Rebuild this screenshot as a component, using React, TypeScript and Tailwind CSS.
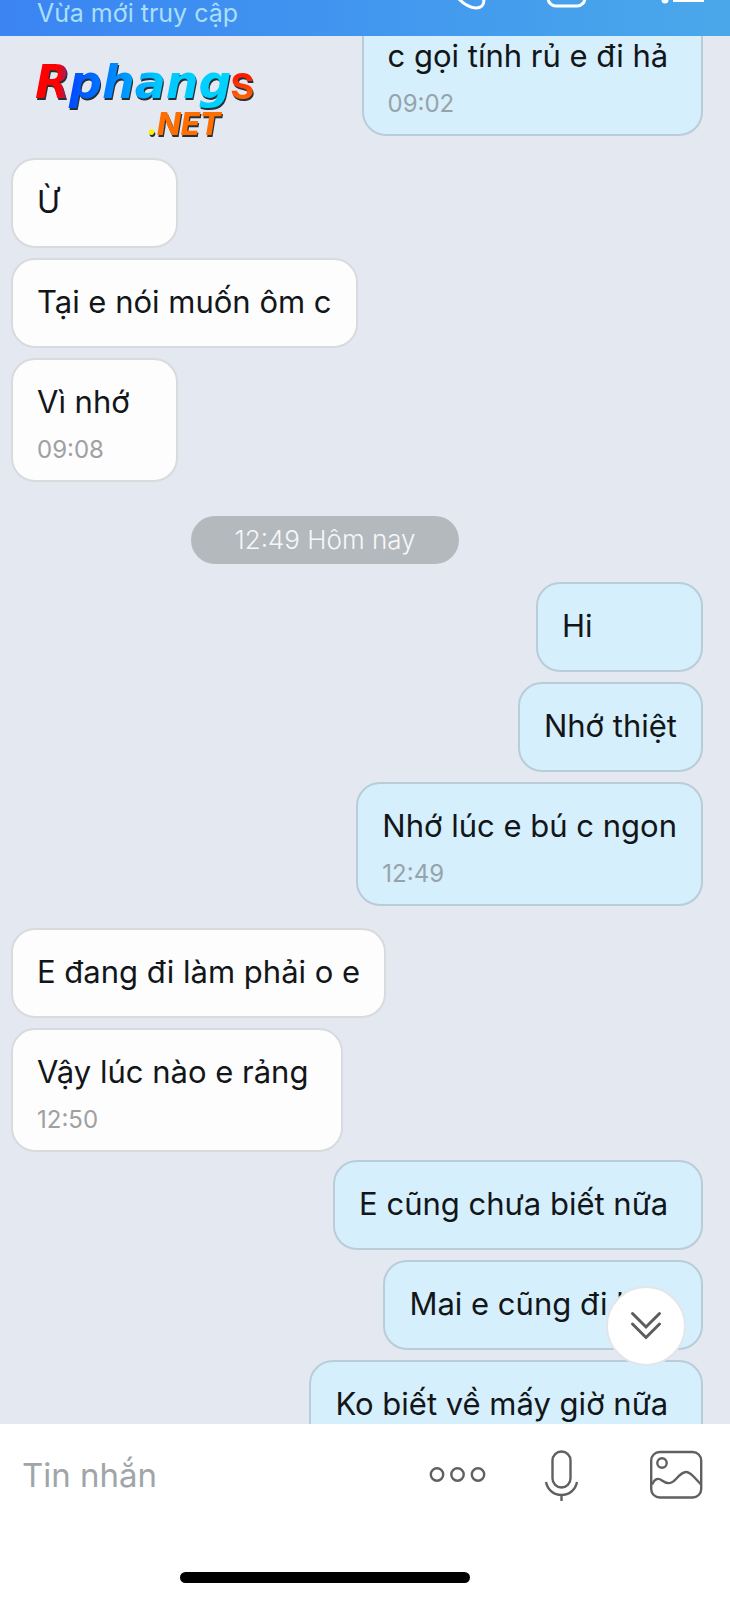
import React, { useState } from 'react';

type Message = { id: number; text: string; time?: string; mine?: boolean };

// Texts keep the trailing space that the phone keyboard leaves after a suggestion
const groups: { id: string; day?: string; className: string; messages: Message[] }[] = [
  {
    id: 'g1',
    className: '-mt-[24px]',
    messages: [{ id: 1, text: 'c gọi tính rủ e đi hả ', time: '09:02', mine: true }],
  },
  {
    id: 'g2',
    className: 'mt-[22px]',
    messages: [
      { id: 2, text: 'Ừ' },
      { id: 3, text: 'Tại e nói muốn ôm c' },
      { id: 4, text: 'Vì nhớ', time: '09:08' },
    ],
  },
  {
    id: 'g3',
    day: '12:49 Hôm nay',
    className: 'mt-[34px]',
    messages: [
      { id: 5, text: 'Hi', mine: true },
      { id: 6, text: 'Nhớ thiệt', mine: true },
      { id: 7, text: 'Nhớ lúc e bú c ngon', time: '12:49', mine: true },
    ],
  },
  {
    id: 'g4',
    className: 'mt-[22px]',
    messages: [
      { id: 8, text: 'E đang đi làm phải o e' },
      { id: 9, text: 'Vậy lúc nào e rảng ', time: '12:50' },
    ],
  },
  {
    id: 'g5',
    className: 'mt-[8px]',
    messages: [
      { id: 10, text: 'E cũng chưa biết nữa ', mine: true },
      { id: 11, text: 'Mai e cũng đi làm ', mine: true },
      { id: 12, text: 'Ko biết về mấy giờ nữa ', time: '12:51', mine: true },
    ],
  },
];

export default function App() {
  const [draft, setDraft] = useState('');

  return (
    <div className="flex h-screen flex-col overflow-hidden bg-[#e3e8f1] font-['Inter','Noto_Sans',sans-serif]">
      <Header />

      <main className="relative min-h-0 flex-1">
        <div className="h-full overflow-hidden pr-[27px] pl-[11px]">
          {groups.map((g) => (
            <section key={g.id} className={g.className}>
              {g.day && (
                <div className="mb-[18px] flex justify-center pr-16">
                  <time className="rounded-full bg-[#b4b9bd] px-[43px] text-[26px] leading-[48px] font-light text-[#f5f8fa]">
                    {g.day}
                  </time>
                </div>
              )}
              <ul className="flex flex-col gap-[10px]">
                {g.messages.map((m) => (
                  <Bubble key={m.id} message={m} />
                ))}
              </ul>
            </section>
          ))}
        </div>

        <Logo />

        <button
          aria-label="Cuộn xuống cuối"
          className="absolute right-[44px] bottom-[58px] flex size-[80px] items-center justify-center rounded-full border-2 border-[#e2e6ea] bg-white"
        >
          <svg width="32" height="30" viewBox="0 0 32 30" fill="none" stroke="#5c5c5e" strokeWidth="3" strokeLinecap="round">
            <path d="M2.500 2.500 16 16 29.500 2.500M2.500 13 16 26.500 29.500 13" />
          </svg>
        </button>
      </main>

      <footer className="bg-white">
        <div className="flex h-[102px] items-center pr-[27px] pl-[22px]">
          <input
            type="text"
            aria-label="Tin nhắn"
            placeholder="Tin nhắn"
            value={draft}
            onChange={(e) => setDraft(e.target.value)}
            className="min-w-0 flex-1 text-[33px] leading-[48px] text-[#111] outline-none placeholder:text-[#a0a5a9]"
          />
          <button aria-label="Thêm" className="mr-[57px]">
            <svg width="58" height="52" viewBox="0 0 58 52" fill="none" stroke="#606060" strokeWidth="2.400">
              <circle cx="8" cy="25.500" r="6.200" />
              <circle cx="28.500" cy="25.500" r="6.200" />
              <circle cx="49" cy="25.500" r="6.200" />
            </svg>
          </button>
          <button aria-label="Ghi âm" className="mr-[70px]">
            <svg width="36" height="52" viewBox="0 0 36 52" fill="none" stroke="#606060" strokeWidth="2.400">
              <rect x="8.500" y="2.500" width="18" height="36" rx="9" />
              <path d="M2 33c1.500 8 8 13 15.500 13s14-5 15.500-13M17.500 46v6" />
            </svg>
          </button>
          <button aria-label="Gửi ảnh">
            <svg width="53" height="52" viewBox="0 0 53 52" fill="none" stroke="#606060" strokeWidth="2.400">
              <rect x="1.200" y="3" width="50" height="45.500" rx="8.500" />
              <circle cx="12" cy="14" r="4.700" />
              <path d="M2 35.500c3-6 6-7 10-4 6 4.500 10 3 14-1.500 4-4.500 6.500-7 10-7s5.500 2.500 8.500 5.500l6.500 7" />
            </svg>
          </button>
        </div>
        <div className="flex justify-center pt-[46px] pr-20 pb-[17px]">
          <div className="h-[11px] w-[290px] rounded-full bg-black" />
        </div>
      </footer>
    </div>
  );
}

function Header() {
  return (
    <header className="flex h-[36px] shrink-0 items-end justify-between overflow-hidden bg-linear-to-r from-[#3b84f3] to-[#4aa8ea] pr-[25px] pl-[37px]">
      <p className="pb-[3px] text-[25px] leading-[40px] text-[#a9dffc]">Vừa mới truy cập</p>
      <div className="flex pb-[26px] text-white">
        <button aria-label="Gọi thoại" className="mr-[50px]">
          <svg width="48" height="44" viewBox="0 0 48 44" fill="none" stroke="currentColor" strokeWidth="3">
            <path d="M5 8c-4 12 14 33 28 34 5 0 8-3 8-8l-9-7-6 4C20 28 17 23 15 18l4-5-6-8c-4-1-7 0-8 3z" />
          </svg>
        </button>
        <button aria-label="Gọi video" className="mr-[60px]">
          <svg width="58" height="44" viewBox="0 0 58 44" fill="none" stroke="currentColor" strokeWidth="3">
            <rect x="7" y="7" width="37" height="33" rx="8" />
            <path d="M44 20l12-7v18l-12-7" />
          </svg>
        </button>
        <button aria-label="Tùy chọn">
          <svg width="46" height="44" viewBox="0 0 46 44" fill="currentColor">
            <circle cx="6" cy="10" r="3.500" />
            <circle cx="6" cy="22" r="3.500" />
            <circle cx="6" cy="34" r="3.500" />
            <path d="M14 8h31v4H14zM14 20h31v4H14zM14 32h31v4H14z" />
          </svg>
        </button>
      </div>
    </header>
  );
}

function Bubble({ message }: { message: Message; key?: React.Key }) {
  const { text, time, mine } = message;
  return (
    <li
      className={`min-w-[167px] rounded-[24px] border-2 px-[24px] pt-[22px] whitespace-pre ${
        mine ? 'self-end border-[#b9cdd8] bg-[#d6effc]' : 'self-start border-[#d9dadd] bg-[#fdfdfd]'
      } ${time ? 'pb-[14px]' : 'pb-[24px]'}`}
    >
      <p className="text-[31px] leading-[40px] text-[#131619]">{text}</p>
      {time && (
        <time className={`mt-[12px] block text-[24px] leading-[32px] ${mine ? 'text-[#97a3aa]' : 'text-[#a0a0a2]'}`}>
          {time}
        </time>
      )}
    </li>
  );
}

function Logo() {
  return (
    <svg
      width="226"
      height="84"
      viewBox="0 0 226 84"
      role="img"
      aria-label="Rphangs.NET"
      className="absolute top-[21px] left-[35px] drop-shadow-[1px_2px_0_#26303a]"
    >
      <defs>
        <linearGradient id="logo-r" gradientUnits="userSpaceOnUse" x1="0" y1="0" x2="36" y2="0">
          <stop offset="0.650" stopColor="#ff0000" />
          <stop offset="1" stopColor="#6a2a9a" />
        </linearGradient>
        <linearGradient id="logo-phang" gradientUnits="userSpaceOnUse" x1="34" y1="0" x2="198" y2="0">
          <stop offset="0" stopColor="#0048ff" />
          <stop offset="0.550" stopColor="#00c8ff" />
          <stop offset="1" stopColor="#00d4ff" />
        </linearGradient>
        <linearGradient id="logo-s" x1="0" y1="0" x2="0" y2="1">
          <stop offset="0.400" stopColor="#ff1a00" />
          <stop offset="0.800" stopColor="#ff6a00" />
        </linearGradient>
      </defs>
      <g className="font-['DejaVu_Sans',sans-serif] text-[46px] font-bold italic">
        <text x="0" y="41" fill="url(#logo-r)">R</text>
        <text x="34" y="41" fill="url(#logo-phang)">phang</text>
      </g>
      <text x="195" y="42" fill="url(#logo-s)" className="font-['Roboto',sans-serif] text-[48px] font-medium">s</text>
      <g className="font-['Inter',sans-serif] text-[31px] font-extrabold italic">
        <text x="112" y="78" fill="#ffee00">.</text>
        <text x="122" y="78" fill="#ff6f00">NET</text>
      </g>
    </svg>
  );
}
